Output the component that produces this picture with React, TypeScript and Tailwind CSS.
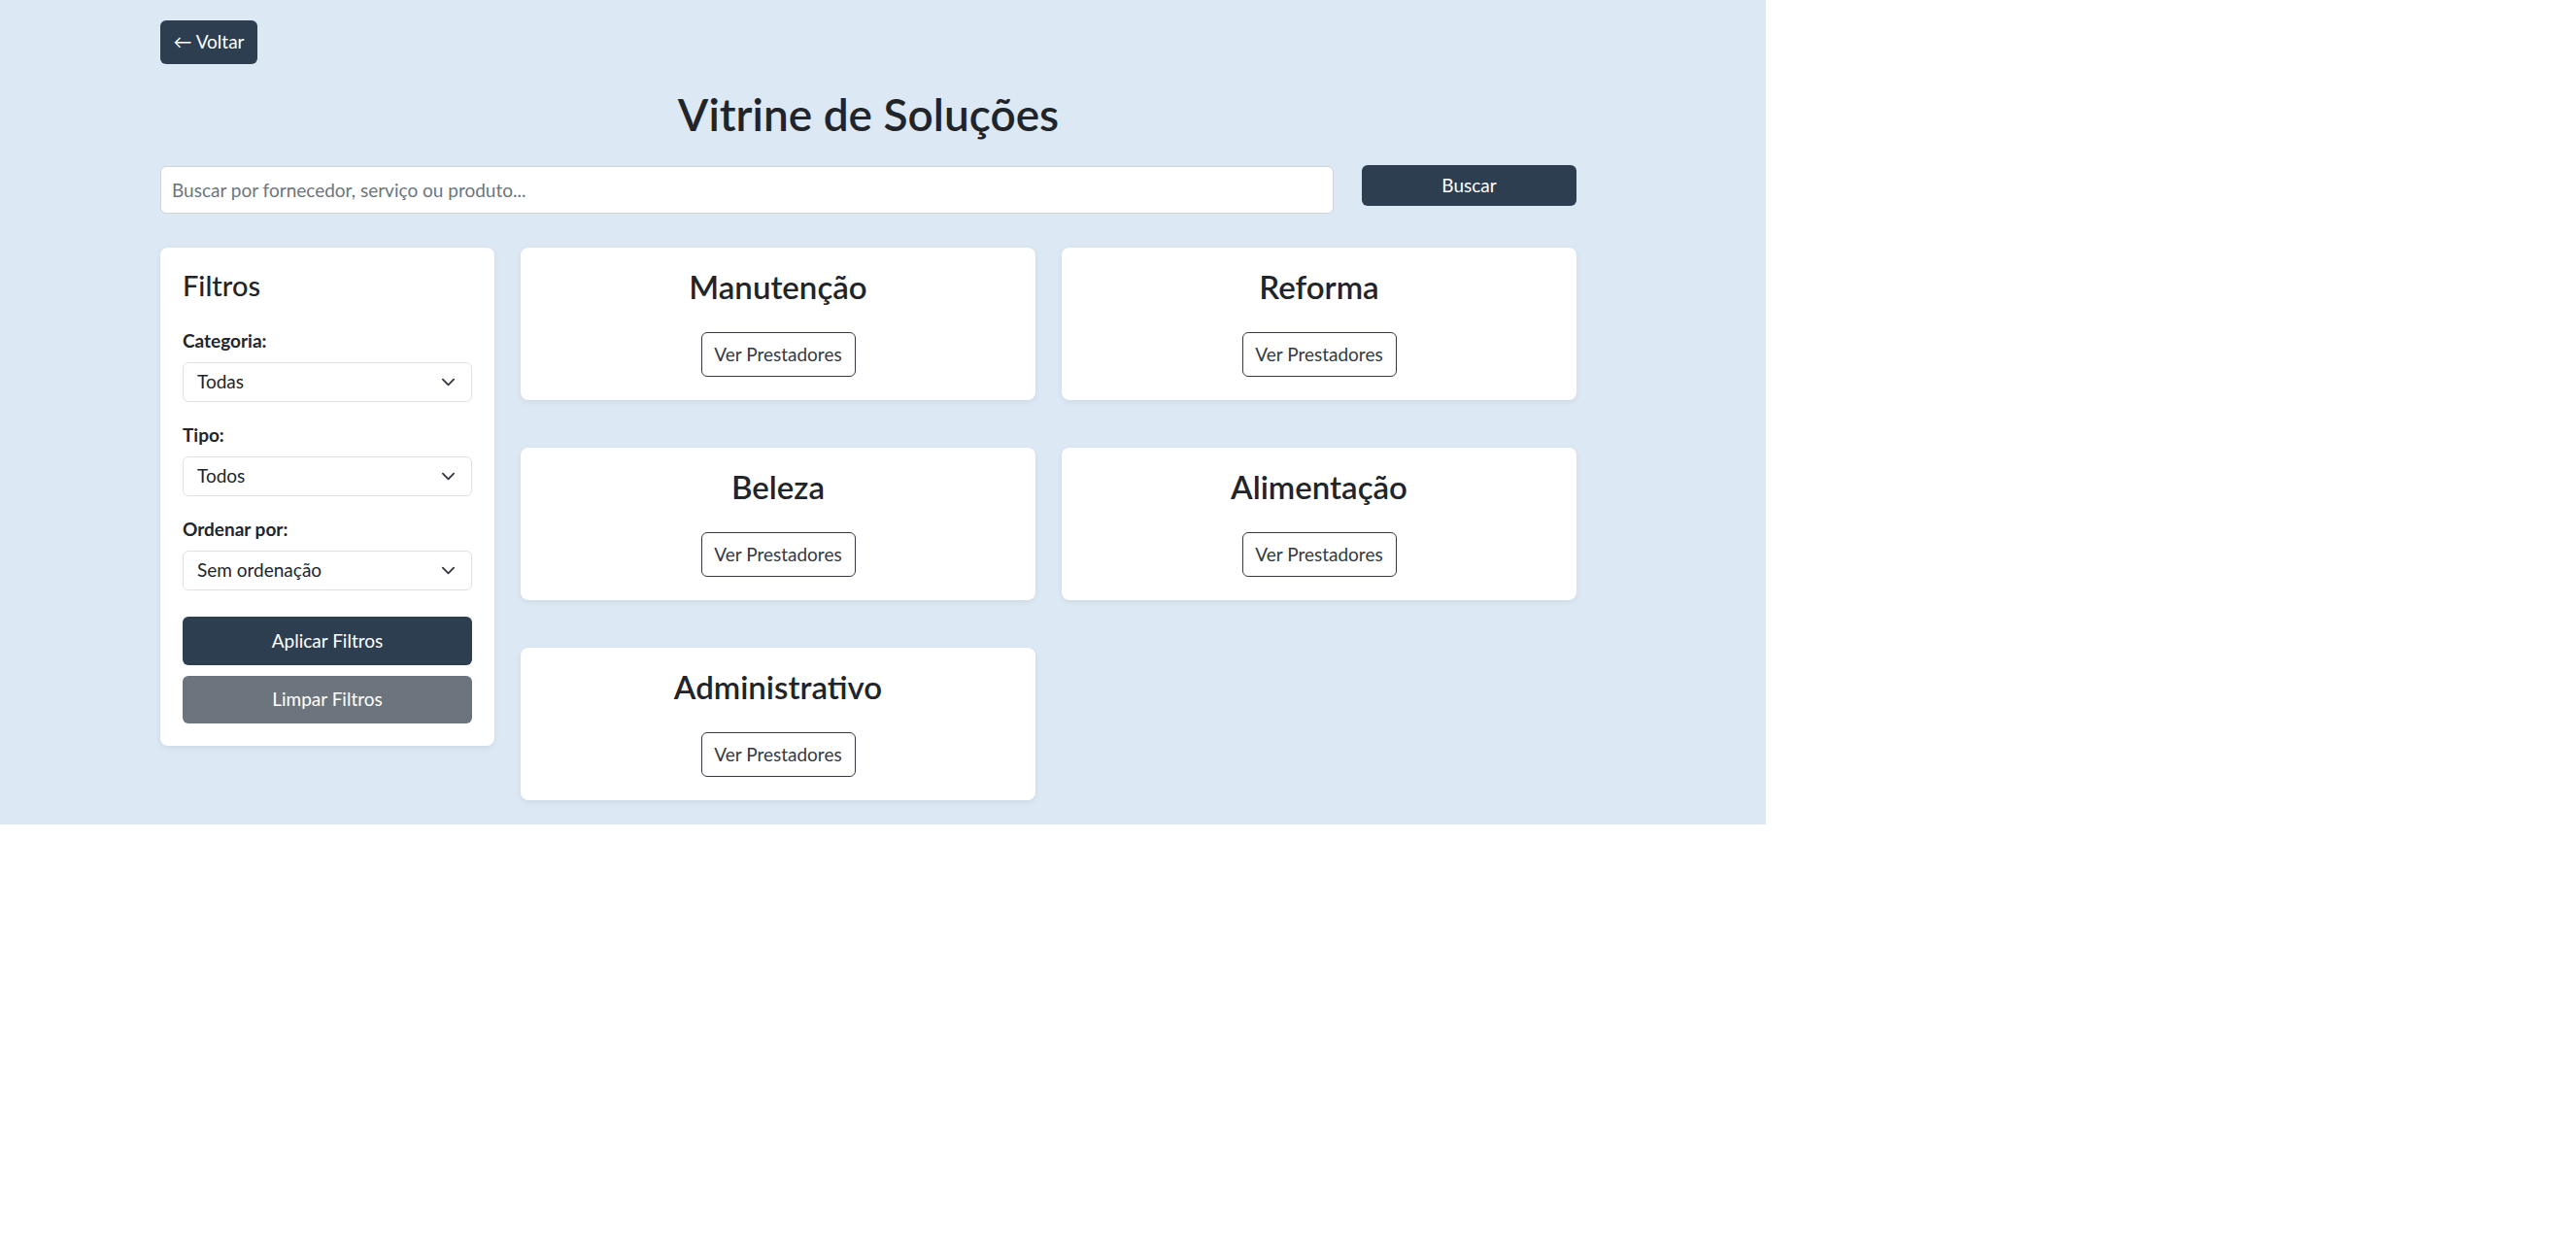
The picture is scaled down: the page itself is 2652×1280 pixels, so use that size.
import { useState } from 'react';

const CATEGORIES = ['Manutenção', 'Reforma', 'Beleza', 'Alimentação', 'Administrativo'];

function Chevron() {
  return (
    <svg viewBox="0 0 16 16" className="w-[15px] h-[15px]" fill="none">
      <path d="m2 5 6 6 6-6" stroke="#343a40" strokeWidth="2" strokeLinecap="round" strokeLinejoin="round" />
    </svg>
  );
}

function FakeSelect({ value }: { value: string }) {
  return (
    <div className="h-[41px] w-full bg-white border border-[#dee2e6] rounded-[6px] flex items-center justify-between pl-[14px] pr-[16px] text-[19px] text-[#212529]">
      <span>{value}</span>
      <Chevron />
    </div>
  );
}

function FilterGroup({ label, value }: { label: string; value: string }) {
  return (
    <div className="mb-[19px]">
      <div className="text-[19px] leading-[29px] font-bold text-[#212529] mb-[8px]">{label}</div>
      <FakeSelect value={value} />
    </div>
  );
}

function CategoryCard({ name }: { name: string }) {
  return (
    <div className="bg-white rounded-[8px] shadow-[0_2px_6px_rgba(0,0,0,0.07)] pt-[20px] pb-[24px] flex flex-col items-center">
      <h3 className="text-[33px] leading-[40px] font-semibold text-[#212529] mb-[27px]">{name}</h3>
      <button className="w-[159px] h-[46px] border border-[#343a40] text-[#343a40] rounded-[6px] text-[19px] bg-white">
        Ver Prestadores
      </button>
    </div>
  );
}

export default function App() {
  const [query, setQuery] = useState('');

  return (
    <div
      className="w-[1818px] min-h-[849px] bg-[#dce8f4] pl-[165px] pt-[21px] pb-[25px]"
      style={{ fontFamily: 'Lato, "Open Sans", sans-serif' }}
    >
      <div className="w-[1458px]">
        <button className="w-[100px] h-[45px] bg-[#2c3e50] text-white rounded-[6px] text-[19px]">
          ← Voltar
        </button>

        <h1 className="mt-[23px] text-center text-[46px] leading-[58px] font-semibold text-[#212529]">
          Vitrine de Soluções
        </h1>

        <div className="mt-[24px] flex items-start gap-[29px]">
          <input
            value={query}
            onChange={e => setQuery(e.target.value)}
            placeholder="Buscar por fornecedor, serviço ou produto..."
            className="flex-1 h-[49px] bg-white border border-[#ced4da] rounded-[6px] pl-[11px] text-[19px] text-[#212529] placeholder:text-[#6c757d] outline-none"
          />
          <button className="w-[221px] h-[42px] -mt-[1px] bg-[#2c3e50] text-white rounded-[6px] text-[19px]">
            Buscar
          </button>
        </div>

        <div className="mt-[35px] flex items-start gap-[27px]">
          <aside className="w-[344px] bg-white rounded-[8px] shadow-[0_2px_6px_rgba(0,0,0,0.07)] p-[23px]">
            <h4 className="text-[29px] leading-[35px] font-medium text-[#212529] -mt-[2px] mb-[25px]">Filtros</h4>
            <FilterGroup label="Categoria:" value="Todas" />
            <FilterGroup label="Tipo:" value="Todos" />
            <FilterGroup label="Ordenar por:" value="Sem ordenação" />
            <button className="mt-[8px] w-full h-[50px] bg-[#2c3e50] text-white rounded-[6px] text-[19px]">
              Aplicar Filtros
            </button>
            <button className="mt-[11px] w-full h-[49px] bg-[#6c757d] text-white rounded-[6px] text-[19px]">
              Limpar Filtros
            </button>
          </aside>

          <div className="flex-1 grid grid-cols-2 gap-x-[27px] gap-y-[49px]">
            {CATEGORIES.map(c => (
              <CategoryCard key={c} name={c} />
            ))}
          </div>
        </div>
      </div>
    </div>
  );
}
